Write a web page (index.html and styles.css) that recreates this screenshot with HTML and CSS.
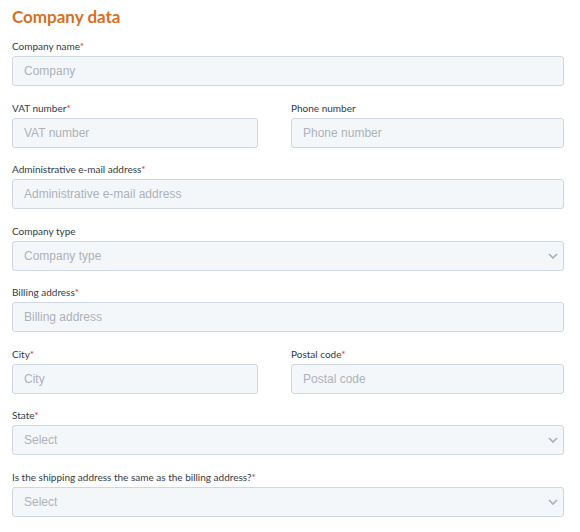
FILE: index.html
```html
<!DOCTYPE html>
<html>
<head>
<meta charset="utf-8">
<link rel="stylesheet" href="styles.css">
</head>
<body>
<div class="page">
  <h2 class="title">Company data</h2>
  <form class="form">
    <div class="field full">
      <label class="label">Company name<span class="req">*</span></label>
      <div class="input">Company</div>
    </div>
    <div class="field">
      <label class="label">VAT number<span class="req">*</span></label>
      <div class="input">VAT number</div>
    </div>
    <div class="field">
      <label class="label">Phone number</label>
      <div class="input">Phone number</div>
    </div>
    <div class="field full">
      <label class="label">Administrative e-mail address<span class="req">*</span></label>
      <div class="input">Administrative e-mail address</div>
    </div>
    <div class="field full">
      <label class="label">Company type</label>
      <div class="input select">Company type
        <svg class="chev" width="10" height="6" viewBox="0 0 10 6"><path d="M1 1l4 4 4-4" fill="none" stroke="#aab1b9" stroke-width="1.7"/></svg>
      </div>
    </div>
    <div class="field full">
      <label class="label">Billing address<span class="req">*</span></label>
      <div class="input">Billing address</div>
    </div>
    <div class="field">
      <label class="label">City<span class="req">*</span></label>
      <div class="input">City</div>
    </div>
    <div class="field">
      <label class="label">Postal code<span class="req">*</span></label>
      <div class="input">Postal code</div>
    </div>
    <div class="field full">
      <label class="label">State<span class="req">*</span></label>
      <div class="input select">Select
        <svg class="chev" width="10" height="6" viewBox="0 0 10 6"><path d="M1 1l4 4 4-4" fill="none" stroke="#aab1b9" stroke-width="1.7"/></svg>
      </div>
    </div>
    <div class="field full">
      <label class="label">Is the shipping address the same as the billing address?<span class="req">*</span></label>
      <div class="input select">Select
        <svg class="chev" width="10" height="6" viewBox="0 0 10 6"><path d="M1 1l4 4 4-4" fill="none" stroke="#aab1b9" stroke-width="1.7"/></svg>
      </div>
    </div>
  </form>
</div>
</body>
</html>
```
FILE: styles.css
```css
html, body {
  margin: 0;
  padding: 0;
  background: #ffffff;
}
.page {
  padding: 6px 16px 0 12px;
}
.title {
  margin: 0;
  font-family: "Lato", sans-serif;
  font-weight: 700;
  font-size: 17px;
  line-height: 22px;
  color: #d8711f;
}
.form {
  display: grid;
  grid-template-columns: 246px 273px;
  column-gap: 33px;
  row-gap: 13.5px;
  margin-top: 10px;
}
.field {
  display: flex;
  flex-direction: column;
  gap: 2px;
}
.full {
  grid-column: 1 / -1;
}
.label {
  font-family: "Lato", sans-serif;
  font-size: 10px;
  line-height: 16px;
  height: 16px;
  color: #343b45;
}
.req {
  color: #e0283a;
}
.input {
  box-sizing: border-box;
  height: 30px;
  display: flex;
  align-items: center;
  justify-content: space-between;
  padding: 0 12px 0 11px;
  background: #f4f7fa;
  border: 1px solid #cdd8e3;
  border-radius: 3px;
  font-family: "Liberation Sans", Arial, sans-serif;
  font-size: 12px;
  color: #adb2b8;
}
.chev {
  display: block;
  margin-right: -7px;
}
```
